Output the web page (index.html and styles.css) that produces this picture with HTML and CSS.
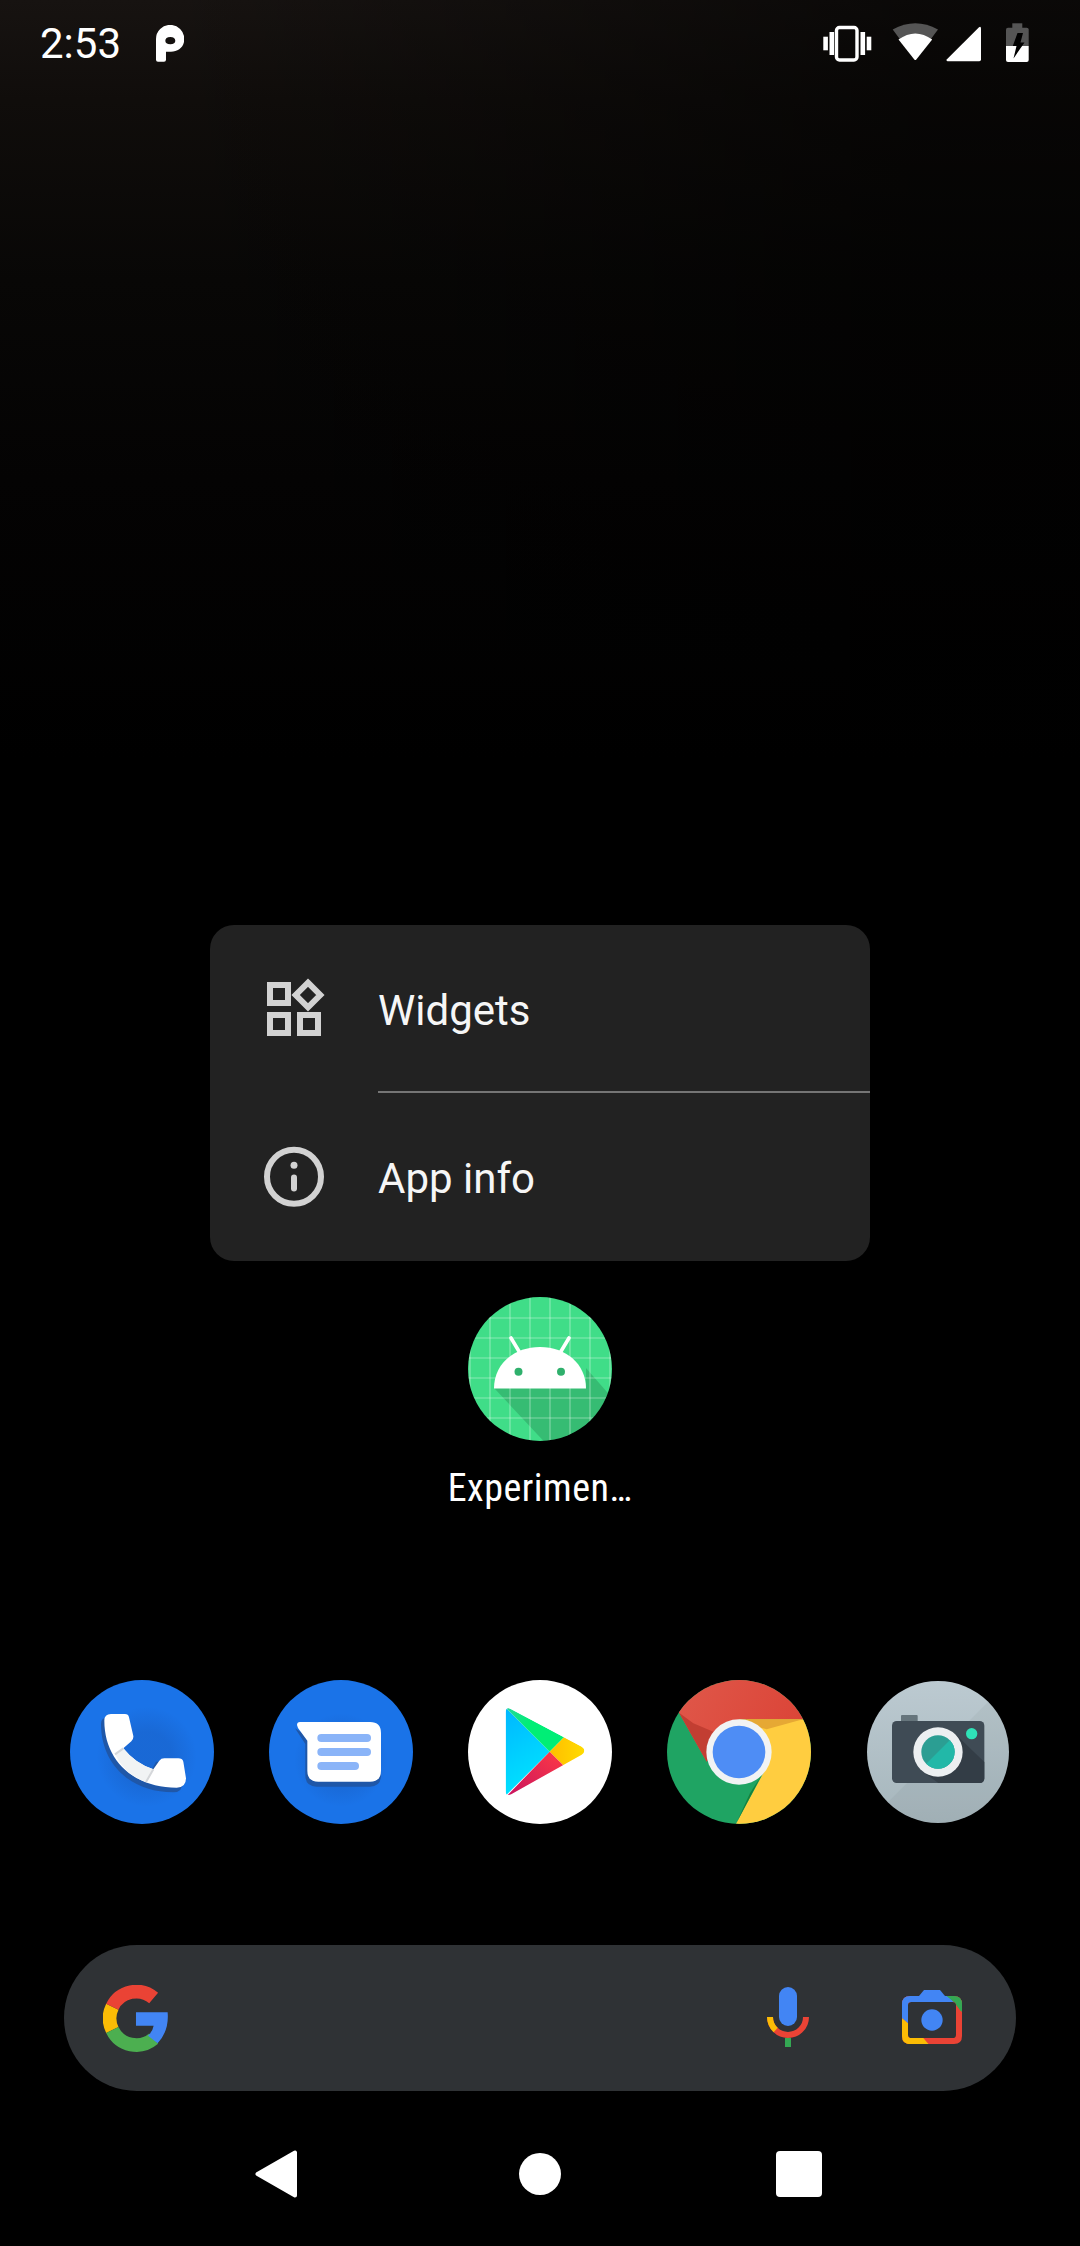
FILE: index.html
```html
<!DOCTYPE html>
<html lang="en">
<head>
<meta charset="utf-8">
<title>Launcher</title>
<link rel="stylesheet" href="styles.css">
</head>
<body>
<div class="screen">
  <header class="status">
    <span class="time">2:53</span>
    <svg class="ic-p" viewBox="0 0 85 110"><path fill="#fff" fill-rule="evenodd" d="M0 42A42 42 0 0 1 85 42C85 66 66 80 45 80L30 80L30 104Q30 110 24 110L6 110Q0 110 0 104ZM43 36C33 36 28 41 28 47C28 53 33 58 43 58C53 58 58 53 58 47C58 41 53 36 43 36Z"/></svg>
    <span class="status-gap"></span>
    <svg class="ic-status" viewBox="790 0 290 90" width="290" height="90">
      <rect x="836.5" y="27.5" width="20.5" height="32.5" rx="3" fill="none" stroke="#fff" stroke-width="3.4"/>
      <rect x="829.5" y="32" width="4.6" height="23" fill="#fff"/>
      <rect x="823.3" y="36.7" width="4.6" height="13.6" fill="#fff"/>
      <rect x="860.5" y="32" width="4.6" height="23" fill="#fff"/>
      <rect x="866.7" y="36.7" width="4.6" height="13.6" fill="#fff"/>
      <path fill="#555" d="M892.7 29.5Q915.3 17 938 29.5L915.3 60Z"/>
      <path fill="#fff" d="M898.5 39.5Q915.3 27.5 932.2 39.5L916.3 59.5Q915.3 60.5 914.3 59.5Z"/>
      <path fill="#fff" d="M946.7 59.5L979 27.2Q981 26 981 28.5L981 59.5Q981 61.3 979.3 61.3L947.5 61.3Q946 61 946.7 59.5Z"/>
      <rect x="1012.3" y="23.3" width="10" height="5" fill="#555"/>
      <path fill="#555" d="M1006 46V29.5Q1006 27.7 1008 27.7H1026.7Q1028.7 27.7 1028.7 29.5V46Z"/>
      <path fill="#fff" d="M1006 46H1028.7V60Q1028.7 62 1026.7 62H1008Q1006 62 1006 60Z"/>
      <path fill="#000" d="M1017.5 33H1023L1020.5 42.5H1024.5L1013.5 58.5L1016.5 46H1012.8Z"/>
    </svg>
  </header>

  <section class="menu">
    <div class="menu-row menu-row-a">
      <svg class="menu-icon" viewBox="0 0 66 66" width="66" height="66">
        <g fill="none" stroke="#d2d2d2" stroke-width="6">
          <rect x="9" y="10" width="18" height="18"/>
          <rect x="9" y="40" width="18" height="18"/>
          <rect x="39" y="40" width="18" height="18"/>
          <path d="M47 7.700L59.300 20L47 32.300L34.700 20Z"/>
        </g>
      </svg>
      <span class="menu-label">Widgets</span>
    </div>
    <div class="menu-divider"></div>
    <div class="menu-row menu-row-b">
      <svg class="menu-icon" viewBox="0 0 66 66" width="66" height="66">
        <circle cx="33" cy="32.700" r="27" fill="none" stroke="#d2d2d2" stroke-width="6"/>
        <circle cx="33" cy="21.200" r="3.500" fill="#d2d2d2"/>
        <rect x="30" y="30.500" width="6" height="17" rx="3" fill="#d2d2d2"/>
      </svg>
      <span class="menu-label">App info</span>
    </div>
  </section>

  <div class="app">
    <svg class="app-icon" viewBox="468 1297 144 144" width="144" height="144">
      <defs><clipPath id="ac"><circle cx="540" cy="1369" r="72"/></clipPath></defs>
      <g clip-path="url(#ac)">
        <rect x="468" y="1297" width="144" height="144" fill="#40dd88"/>
        <path d="M494 1388H586V1368L640 1430L586 1480H580Z" fill="#000" fill-opacity=".15"/>
        <g stroke="#fff" stroke-opacity=".26" stroke-width="1.700">
          <path d="M470 1297V1441M490 1297V1441M510 1297V1441M530 1297V1441M550 1297V1441M570 1297V1441M590 1297V1441M610 1297V1441"/>
          <path d="M468 1318H612M468 1338H612M468 1358H612M468 1378H612M468 1398H612M468 1418H612"/>
        </g>
      </g>
      <path d="M494 1388.500C494 1364 514 1347 540 1347C566 1347 586 1364 586 1388.500Z" fill="#fff"/>
      <path d="M511 1338L520 1353M569 1338L560 1353" stroke="#fff" stroke-width="3.600" stroke-linecap="round"/>
      <circle cx="518.500" cy="1371.700" r="4" fill="#2fb06c"/>
      <circle cx="561" cy="1371.700" r="4" fill="#2fb06c"/>
    </svg>
    <span class="app-label">Experimen…</span>
  </div>

  <nav class="dock">
    <svg class="dock-icon" viewBox="60 60 432 432" width="144" height="144">
      <defs>
        <radialGradient id="ps" cx=".5" cy=".5" r=".5"><stop offset=".5" stop-color="#174ea6" stop-opacity=".28"/><stop offset="1" stop-color="#174ea6" stop-opacity="0"/></radialGradient>
      </defs>
      <circle cx="276" cy="276" r="216" fill="#1a73e8"/>
      <circle cx="290" cy="290" r="150" fill="url(#ps)"/>
      <path fill="#1f57a8" d="M153 192Q153 172 173 172L215 172L238 238L210 275Q245 320 300 338L318 305L375 305L398 365Q398 397 370 397C240 397 153 310 153 192Z"/>
      <path fill="#fff" d="M163 182Q163 162 183 162L225 162Q235 162 237 172L250 228Q251 238 244 244L220 265Q255 310 310 328L328 302Q333 295 343 295L385 295Q397 295 400 305L408 355Q408 383 380 383C250 383 163 300 163 182Z"/>
      <path fill="#f1f3f4" d="M195 283L220 265Q255 310 310 328L290 367Q225 345 195 283Z"/>
      <path stroke="#d5d7da" stroke-width="6" fill="none" d="M195 283L220 265M310 328L288 366"/>
    </svg>
    <svg class="dock-icon" viewBox="657 60 432 432" width="144" height="144">
      <circle cx="873" cy="276" r="216" fill="#1a73e8"/>
      <circle cx="873" cy="300" r="140" fill="url(#ps)"/>
      <path fill="#1f57a8" d="M735 205L766 252L766 345Q766 380 800 380L960 380Q993 380 993 345L993 330L790 240Z"/>
      <path fill="#fff" d="M741 195Q741 186 750 186L960 186Q993 186 993 219L993 332Q993 365 960 365L805 365Q772 365 772 332L772 242L744 204Z"/>
      <rect x="802" y="222" width="161" height="24" rx="12" fill="#8ab4f8"/>
      <rect x="802" y="264" width="161" height="24" rx="12" fill="#8ab4f8"/>
      <rect x="802" y="306" width="125" height="24" rx="12" fill="#8ab4f8"/>
    </svg>
    <svg class="dock-icon" viewBox="55 60 432 432" width="144" height="144">
      <defs>
        <clipPath id="pc"><path d="M168 158Q168 138 186 148L396 260Q412 272 396 284L186 402Q168 412 168 392Z"/></clipPath>
        <linearGradient id="pb" x1="0" y1="0" x2=".3" y2="1"><stop offset="0" stop-color="#00b4ff"/><stop offset="1" stop-color="#00e4ff"/></linearGradient>
        <linearGradient id="pg" x1="0" y1="0" x2="1" y2=".5"><stop offset="0" stop-color="#2bd4a0"/><stop offset=".5" stop-color="#00ee76"/></linearGradient>
        <linearGradient id="pr" x1="1" y1="0" x2="0" y2="1"><stop offset="0" stop-color="#ff3a44"/><stop offset="1" stop-color="#c31162"/></linearGradient>
        <linearGradient id="py" x1="1" y1="0" x2="0" y2="0"><stop offset="0" stop-color="#ffe000"/><stop offset="1" stop-color="#ffbd00"/></linearGradient>
      </defs>
      <circle cx="271" cy="276" r="216" fill="#fff"/>
      <g clip-path="url(#pc)">
        <path fill="url(#pb)" d="M160 135L300 275L160 415Z"/>
        <path fill="url(#pg)" d="M160 135L343 232L300 275Z"/>
        <path fill="url(#py)" d="M343 232L420 272L343 318L300 275Z"/>
        <path fill="url(#pr)" d="M300 275L343 318L160 420Z"/>
      </g>
    </svg>
    <svg class="dock-icon" viewBox="51 60 432 432" width="144" height="144">
      <defs>
        <clipPath id="cc"><circle cx="267" cy="276" r="216"/></clipPath>
        <linearGradient id="cr" x1="0" y1="0" x2="1" y2=".3"><stop offset="0" stop-color="#e05a4c"/><stop offset="1" stop-color="#db4437"/></linearGradient>
      </defs>
      <g clip-path="url(#cc)">
        <rect x="51" y="60" width="432" height="432" fill="#1fa463"/>
        <path fill="#ffcd40" d="M459 178L500 178L500 500L258 491L345 330L267 178Z"/>
        <path fill="url(#cr)" d="M87 158L40 40L500 40L459 178L267 178L170 305Z"/>
        <path fill="#c23e32" d="M87 158L130 190L190 215L170 305Z"/>
        <path fill="#e6a834" d="M290 178L459 178L350 208L320 200Z"/>
        <path fill="#15803d" d="M335 345L258 491L300 400Z"/>
      </g>
      <circle cx="267" cy="276" r="98" fill="#f1f3f4"/>
      <circle cx="267" cy="276" r="79" fill="#4e8df5"/>
    </svg>
    <svg class="dock-icon" viewBox="648 60 432 432" width="144" height="144">
      <defs>
        <clipPath id="kc"><circle cx="864" cy="276" r="213"/></clipPath>
        <clipPath id="kl"><circle cx="864" cy="276" r="50"/></clipPath>
        <linearGradient id="kb" x1="0" y1="0" x2="0" y2="1"><stop offset="0" stop-color="#bccad1"/><stop offset="1" stop-color="#a6b6bc"/></linearGradient>
      </defs>
      <g clip-path="url(#kc)">
        <rect x="648" y="60" width="432" height="432" fill="url(#kb)"/>
        <path fill="#000" fill-opacity=".035" d="M1040 100L1100 100L1100 500L700 500L690 450Z"/>
      </g>
      <rect x="753" y="165" width="50" height="30" rx="3" fill="#66757c"/>
      <rect x="726" y="183" width="277" height="186" rx="14" fill="#3f4b55"/>
      <path fill="#333d46" d="M916 222L1003 306L1003 355Q1003 369 989 369L865 369L812 330Z"/>
      <circle cx="864" cy="276" r="74" fill="#eceff1"/>
      <g clip-path="url(#kl)">
        <rect x="810" y="222" width="110" height="110" fill="#2b9e93"/>
        <path fill="#22b8a8" d="M925 215L925 335L805 335Z"/>
      </g>
      <circle cx="965" cy="221" r="17" fill="#2fe3b8"/>
    </svg>
  </nav>

  <div class="search">
    <svg class="g-logo" viewBox="129 163 196 201" width="65.300" height="67">
      <g fill="none" stroke-width="41">
        <path stroke="#fbbc05" d="M157 228A80 80 0 0 0 157 298"/>
        <path stroke="#ea4335" d="M157 228A80 80 0 0 1 281 202"/>
        <path stroke="#4caf50" d="M157 298A80 80 0 0 0 281 324"/>
      </g>
      <path fill="#4285f4" d="M228 245H323Q328 300 293 338L264 315Q278 303 281 285H228Z"/>
    </svg>
    <span class="search-gap"></span>
    <svg class="mic" viewBox="141 174 126 180" width="42" height="60">
      <rect x="177" y="174" width="54" height="117" rx="27" fill="#4285f4"/>
      <rect x="195" y="326" width="18" height="28" fill="#34a853"/>
      <path d="M150 264A54 54 0 0 0 258 264" fill="none" stroke="#ea4335" stroke-width="18"/>
      <path d="M150 264A54 54 0 0 0 167 303" fill="none" stroke="#fbbc05" stroke-width="18"/>
    </svg>
    <svg class="lens" viewBox="546 183 180 162" width="60" height="54">
      <defs><clipPath id="lc"><path clip-rule="evenodd" d="M570 201H702Q726 201 726 225V321Q726 345 702 345H570Q546 345 546 321V225Q546 201 570 201ZM574 219Q564 219 564 229V317Q564 327 574 327H698Q708 327 708 317V229Q708 219 698 219Z"/></clipPath></defs>
      <g clip-path="url(#lc)">
        <rect x="540" y="190" width="190" height="160" fill="#ea4335"/>
        <path fill="#fbbc05" d="M540 262L566 284L566 325L626 345L540 350Z"/>
        <path fill="#fbbc05" d="M566 325L610 327L626 346L560 350Z"/>
        <path fill="#4285f4" d="M540 190H680L702 222L566 222L566 284L540 262Z"/>
        <path fill="#34a853" d="M672 195H730V250L722 246L702 219Z"/>
      </g>
      <path fill="#4285f4" d="M597 201L612 183H660L675 201V219H597Z"/>
      <circle cx="636" cy="273" r="32" fill="#4285f4"/>
    </svg>
  </div>

  <footer class="nav">
    <svg class="nav-back" viewBox="0 0 42 48" width="42" height="48"><path fill="#fff" stroke="#fff" stroke-width="4" stroke-linejoin="round" d="M2.500 24L40 2.500V45.500Z"/></svg>
    <span class="nav-home"></span>
    <span class="nav-recent"></span>
  </footer>
</div>
</body>
</html>
```

FILE: styles.css
```css
* { box-sizing: border-box; }
html, body { margin: 0; padding: 0; background: #000; }
svg { display: block; flex: none; }

.screen {
  position: relative;
  width: 1080px;
  height: 2246px;
  overflow: hidden;
  display: flex;
  flex-direction: column;
  font-family: Roboto, "Noto Sans", sans-serif;
  color: #fff;
  background:
    linear-gradient(90deg, rgba(0, 0, 0, 0) 15%, rgba(0, 0, 0, .55) 85%),
    linear-gradient(180deg, #171311 0, #100d0b 100px, #080706 280px, #040303 480px, #000 760px);
}

.status {
  position: relative;
  height: 84px;
  display: flex;
  align-items: flex-start;
  padding-left: 40px;
}
.time {
  font-size: 42px;
  line-height: 48px;
  margin-top: 20px;
  width: 116px;
}
.ic-p { width: 28.300px; height: 36.700px; margin-top: 25px; }
.status-gap { flex: 1; }

.menu {
  margin: 841px 0 0 210px;
  width: 660px;
  height: 336px;
  border-radius: 24px;
  background: #222;
}
.menu-row {
  height: 168px;
  display: flex;
  align-items: center;
  padding-left: 51px;
}
.menu-row-a { height: 166px; }
.menu-icon { margin-right: 51px; }
.menu-label {
  font-size: 42px;
  line-height: 50px;
  color: #f6f6f6;
  position: relative;
  top: 2px;
}
.menu-row-a .menu-label { top: 3px; }
.menu-divider { height: 2px; margin-left: 168px; background: #757575; }

.app {
  margin-top: 36px;
  display: flex;
  flex-direction: column;
  align-items: center;
}
.app-label {
  margin-top: 25px;
  font-family: "Roboto Condensed", "Liberation Sans Narrow", Roboto, sans-serif;
  font-stretch: condensed;
  font-size: 38px;
  letter-spacing: .5px;
  line-height: 44px;
}

.dock {
  margin-top: 170px;
  padding-left: 70px;
  display: flex;
  gap: 55px;
}

.search {
  margin: 121px 0 0 64px;
  width: 952px;
  height: 146px;
  border-radius: 73px;
  background: #2f3235;
  display: flex;
  align-items: center;
  padding-left: 39px;
}
.search-gap { flex: 1; }
.mic { margin-right: 93px; margin-top: -2px; }
.lens { margin-right: 54px; margin-top: -2px; }

.nav {
  margin-top: 59px;
  display: flex;
  align-items: center;
  padding-left: 255px;
}
.nav-home {
  width: 42px;
  height: 42px;
  border-radius: 50%;
  background: #fff;
  margin-left: 222px;
}
.nav-recent {
  width: 46px;
  height: 46px;
  border-radius: 4px;
  background: #fff;
  margin-left: 215px;
}
```
